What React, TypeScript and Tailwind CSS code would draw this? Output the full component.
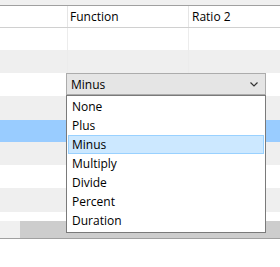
import React from "react";

const rowHeights = [22, 23, 23, 24, 22, 23, 23, 24, 23];
const rowBg = (i: number) => {
  if (i === 4) return "bg-[#99ccff]";
  return i % 2 === 1 ? "bg-[#efefef]" : "bg-white";
};

const items = ["None", "Plus", "Minus", "Multiply", "Divide", "Percent", "Duration"];

export default function App() {
  return (
    <div
      className="relative w-[280px] h-[267px] bg-white overflow-hidden text-[12px] text-black"
      style={{ fontFamily: '"Open Sans", "Liberation Sans", sans-serif' }}
    >
      <div className="h-[5px] bg-[#f0f0f0]" />
      <div className="h-px bg-[#a0a0a0]" />
      <div className="flex h-[22px] border-b border-[#d0d0d0]">
        <div className="w-[68px] border-r border-[#e5e5e5]" />
        <div className="w-[121px] border-r border-[#e5e5e5] pl-[2px] flex items-center">Function</div>
        <div className="flex-1 pl-[3px] flex items-center">Ratio 2</div>
      </div>
      <div className="h-[193px] overflow-hidden flex flex-col">
        {rowHeights.map((h, i) => (
          <div key={i} className={`flex shrink-0 ${rowBg(i)}`} style={{ height: h }}>
            <div className={`w-[68px] border-r ${i === 4 ? "border-[#99ccff]" : "border-[#ececec]"}`} />
            <div className={`w-[121px] border-r ${i === 4 ? "border-[#99ccff]" : "border-[#ececec]"}`} />
            <div className="flex-1" />
          </div>
        ))}
      </div>
      <div className="flex h-[17px]">
        <div className="w-[20px] bg-[#f0f0f0]" />
        <div className="flex-1 bg-[#cdcdcd]" />
      </div>
      <div className="h-px bg-[#a0a0a0]" />

      {/* Combo box */}
      <div className="absolute left-[66px] top-[73px] w-[200px] h-[22px] border border-[#acacac] bg-[#e5e5e5] flex items-center pl-[4px]">
        <span className="flex-1 pt-px">Minus</span>
        <svg width="8" height="5" viewBox="0 0 8 5" className="mr-[7px]">
          <polyline points="0.5,0.5 4,4 7.5,0.5" fill="none" stroke="#333" strokeWidth="1.2" />
        </svg>
      </div>

      {/* Dropdown list */}
      <div className="absolute left-[66px] top-[95px] w-[200px] h-[138px] border border-[#7a7a7a] bg-white p-px flex flex-col">
        {items.map((it) => (
          <div
            key={it}
            className={`h-[19px] shrink-0 flex items-center pl-[3px] pt-px border ${
              it === "Minus" ? "bg-[#cce8ff] border-[#99d1ff]" : "border-transparent"
            }`}
          >
            {it}
          </div>
        ))}
      </div>
    </div>
  );
}
